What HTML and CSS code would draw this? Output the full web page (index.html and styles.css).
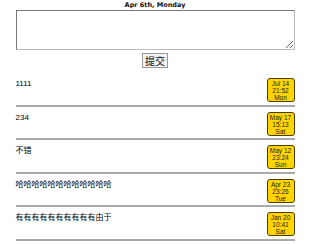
FILE: index.html
```html
<!DOCTYPE html>
<html lang="en">
<head>
    <meta charset="UTF-8">
    <meta name="viewport" content="width=device-width, initial-scale=1.0">
    <title>Diary</title>
    <link rel="stylesheet" href="styles.css">
</head>
<body>
    <div class="container">
        <div class="today">Apr 6th, Monday</div>
        <textarea class="entry-input"></textarea>
        <div class="submit-row">
            <button class="submit-btn">提交</button>
        </div>
        <div class="entries">
            <div class="entry">
                <div class="entry-text">1111</div>
                <div class="stamp">Jul 14<br>21:52<br>Mon</div>
            </div>
            <div class="entry">
                <div class="entry-text">234</div>
                <div class="stamp">May 17<br>15:13<br>Sat</div>
            </div>
            <div class="entry">
                <div class="entry-text">不错</div>
                <div class="stamp">May 12<br>23:24<br>Sun</div>
            </div>
            <div class="entry">
                <div class="entry-text">哈哈哈哈哈哈哈哈哈哈哈哈</div>
                <div class="stamp">Apr 23<br>23:26<br>Tue</div>
            </div>
            <div class="entry">
                <div class="entry-text">有有有有有有有有有有由于</div>
                <div class="stamp">Jan 20<br>10:41<br>Sat</div>
            </div>
        </div>
    </div>
</body>
</html>
```

FILE: styles.css
```css
body {
    margin: 0;
    font-family: "Liberation Sans", "Noto Sans CJK SC", sans-serif;
    color: #000;
}

.container {
    width: 90%;
    margin: 0 auto;
}

.today {
    text-align: center;
    font-family: "DejaVu Sans", sans-serif;
    font-size: 6.5px;
    font-weight: bold;
    line-height: 10px;
    color: #111;
}

.entry-input {
    display: block;
    width: 100%;
    height: 40px;
    box-sizing: border-box;
    margin: 0;
    border: 1px solid #777;
    border-right-color: #bbb;
    border-bottom-color: #bbb;
    resize: vertical;
}

.submit-row {
    display: flex;
    justify-content: center;
    margin-top: 3px;
}

.submit-btn {
    font-family: "Noto Sans CJK SC", sans-serif;
    font-size: 10px;
    line-height: 13px;
    padding: 0 2px;
    border: 1px solid #999;
    background: #f2f2f2;
    color: #111;
}

.entries {
    margin-top: 5px;
}

.entry {
    display: flex;
    justify-content: space-between;
    align-items: flex-start;
    padding: 5px 0 2.6px;
    border-bottom: 2px solid #aaa;
}

.entry-text {
    font-size: 8px;
    line-height: 10px;
    padding-top: 1px;
    color: #000;
}

.stamp {
    width: 26px;
    height: 21px;
    background: #ffd400;
    border: 1px solid #4a3d00;
    border-radius: 3px;
    font-size: 6.5px;
    line-height: 7px;
    text-align: center;
    padding-top: 1px;
    color: #222;
}
```
